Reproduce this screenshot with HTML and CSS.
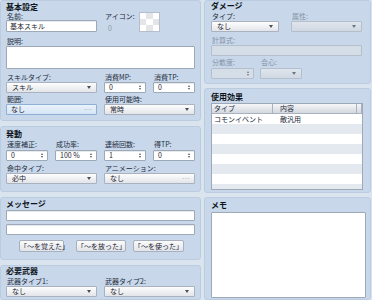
FILE: index.html
```html
<!DOCTYPE html>
<html lang="ja">
<head>
<meta charset="utf-8">
<link rel="stylesheet" href="styles.css">
</head>
<body>
<div class="app">
  <div class="col col-left">
    <section class="panel p-basic">
      <h2 class="ttl">基本設定</h2>
      <div class="row-name">
        <div class="f w-name"><div class="lbl">名前:</div><div class="ctl input">基本スキル</div></div>
        <div class="f w-icon"><div class="lbl">アイコン:</div><div class="icon-idx">0</div></div>
        <div class="icon-box"><i></i><i class="g"></i><i></i><i class="g"></i><i></i><i class="g"></i><i></i><i class="g"></i><i></i></div>
      </div>
      <div class="f mt4"><div class="lbl">説明:</div><div class="ctl textarea"></div></div>
      <div class="grid4 mt4">
        <div class="f span2"><div class="lbl">スキルタイプ:</div><div class="ctl select"><span>スキル</span><i class="arr"></i></div></div>
        <div class="f"><div class="lbl">消費MP:</div><div class="ctl input num"><span>0</span><i class="spin"><b class="up"></b><b class="dn"></b></i></div></div>
        <div class="f"><div class="lbl">消費TP:</div><div class="ctl input num"><span>0</span><i class="spin"><b class="up"></b><b class="dn"></b></i></div></div>
      </div>
      <div class="grid4 mt2">
        <div class="f span2"><div class="lbl">範囲:</div><div class="ctl pick focus"><span>なし</span><i class="dots">···</i></div></div>
        <div class="f span2"><div class="lbl">使用可能時:</div><div class="ctl select"><span>常時</span><i class="arr"></i></div></div>
      </div>
    </section>

    <section class="panel p-invoke">
      <h2 class="ttl">発動</h2>
      <div class="grid4 mt1">
        <div class="f"><div class="lbl lb10">速度補正:</div><div class="ctl input num"><span>0</span><i class="spin"><b class="up"></b><b class="dn"></b></i></div></div>
        <div class="f"><div class="lbl lb10">成功率:</div><div class="ctl input num"><span>100 %</span><i class="spin"><b class="up"></b><b class="dn"></b></i></div></div>
        <div class="f"><div class="lbl lb10">連続回数:</div><div class="ctl input num"><span>1</span><i class="spin"><b class="up"></b><b class="dn"></b></i></div></div>
        <div class="f"><div class="lbl lb10">得TP:</div><div class="ctl input num"><span>0</span><i class="spin"><b class="up"></b><b class="dn"></b></i></div></div>
      </div>
      <div class="grid4 mt3">
        <div class="f span2"><div class="lbl">命中タイプ:</div><div class="ctl select"><span>必中</span><i class="arr"></i></div></div>
        <div class="f span2"><div class="lbl">アニメーション:</div><div class="ctl pick"><span>なし</span><i class="dots">···</i></div></div>
      </div>
    </section>

    <section class="panel p-msg">
      <h2 class="ttl">メッセージ</h2>
      <div class="ctl input mt1"></div>
      <div class="ctl input mt3"></div>
      <div class="btns">
        <button class="btn b1">「～を覚えた」</button>
        <button class="btn b2">「～を放った」</button>
        <button class="btn b3">「～を使った」</button>
      </div>
    </section>

    <section class="panel p-weapon">
      <h2 class="ttl t0">必要武器</h2>
      <div class="grid4 mt1">
        <div class="f span2"><div class="lbl">武器タイプ1:</div><div class="ctl select"><span>なし</span><i class="arr"></i></div></div>
        <div class="f span2"><div class="lbl">武器タイプ2:</div><div class="ctl select"><span>なし</span><i class="arr"></i></div></div>
      </div>
    </section>
  </div>

  <div class="col col-right">
    <section class="panel p-damage">
      <h2 class="ttl t0">ダメージ</h2>
      <div class="dmg-row mt1">
        <div class="f w-type"><div class="lbl">タイプ:</div><div class="ctl select"><span>なし</span><i class="arr"></i></div></div>
        <div class="f w-elem"><div class="lbl dis">属性:</div><div class="ctl select disabled"><span></span><i class="arr"></i></div></div>
      </div>
      <div class="f mt4 w-formula"><div class="lbl dis">計算式:</div><div class="ctl input disabled"></div></div>
      <div class="dmg-row2 mt2">
        <div class="f w-var"><div class="lbl lb10 dis">分散度:</div><div class="ctl input num disabled"><span></span><i class="spin"><b class="up"></b><b class="dn"></b></i></div></div>
        <div class="f w-crit"><div class="lbl lb10 dis">会心:</div><div class="ctl select disabled"><span></span><i class="arr"></i></div></div>
      </div>
    </section>

    <section class="panel p-effects">
      <h2 class="ttl t3">使用効果</h2>
      <div class="table">
        <div class="tr thead"><span class="c1">タイプ</span><span class="c2">内容</span><span class="c3"></span></div>
        <div class="tr"><span class="c1">コモンイベント</span><span class="c2">敵汎用</span><span class="c3"></span></div>
        <div class="tr alt"></div>
        <div class="tr"></div>
        <div class="tr alt"></div>
        <div class="tr"></div>
        <div class="tr alt"></div>
        <div class="tr"></div>
        <div class="tr alt"></div>
      </div>
    </section>

    <section class="panel p-memo">
      <h2 class="ttl">メモ</h2>
      <div class="ctl textarea memo"></div>
    </section>
  </div>
</div>
</body>
</html>
```

FILE: styles.css
```css
* { box-sizing: border-box; margin: 0; padding: 0; }
html, body { width: 372px; height: 300px; overflow: hidden; }
body {
  background: #dae4ef;
  font-family: "Noto Sans CJK JP", "Noto Sans", sans-serif;
  font-size: 7px;
  color: #1d2b3d;
}
.app { display: flex; gap: 3px; height: 300px; }
.col { display: flex; flex-direction: column; }
.col-left { width: 201px; gap: 5px; }
.col-right { width: 167px; gap: 4px; }

.panel {
  background: #c8d7e9;
  border: 1px solid #bccce0;
  border-radius: 3px;
  flex: none;
}
.col-left .panel { padding: 0 5px 0 5px; }
.col-right .panel { padding: 0 4px 0 6px; }
.p-basic { height: 121px; }
.p-invoke { height: 66px; }
.p-msg { height: 63px; }
.p-weapon { flex: 1 1 auto !important; }
.p-damage { height: 84px; }
.p-effects { height: 105px; }
.p-memo { flex: 1 1 auto !important; }

.ttl {
  font-size: 8px;
  font-weight: 700;
  color: #0d1420;
  height: 10px;
  line-height: 10px;
  margin-top: 1px;
}
.p-invoke .ttl { margin-top: 2px; }
.ttl.t0 { margin-top: 0; }
.ttl.t3 { margin-top: 3px; }
.p-memo .ttl { margin-top: 2px; }

.mt1 { margin-top: 1px; }
.mt2 { margin-top: 2px; }
.mt3 { margin-top: 3px; }
.mt4 { margin-top: 4px; }

.f { display: flex; flex-direction: column; min-width: 0; }
.lbl { height: 9px; line-height: 9px; padding-left: 1px; white-space: nowrap; }
.lb10 { height: 10px; }
.lbl.dis { color: #8593a8; }

.grid4 {
  display: grid;
  grid-template-columns: 42px 42px 42px 42px;
  column-gap: 7px;
}
.span2 { grid-column: span 2; }

.row-name { display: flex; height: 21px; }
.w-name { width: 91px; }
.w-name .lbl { height: 8px; line-height: 8px; }
.w-name .ctl { height: 12px; }
.w-icon { width: 35px; margin-left: 7px; }
.w-icon .lbl { height: 8px; line-height: 8px; }
.icon-idx { color: #8e9aab; padding: 2px 0 0 4px; line-height: 12px; }
.icon-box {
  width: 21px; height: 20px;
  display: grid;
  grid-template-columns: repeat(3, 1fr);
  grid-template-rows: repeat(3, 1fr);
  border: 1px solid #b3bfcd;
  background: #fff;
}
.icon-box i { background: #ffffff; }
.icon-box i.g { background: #e3e5e8; }

.ctl {
  height: 11px;
  line-height: 9px;
  border: 1px solid #9ea9b8;
  background: #fff;
  border-radius: 1px;
  padding: 0 4px 0 4px;
  display: flex;
  align-items: center;
  justify-content: space-between;
  white-space: nowrap;
  color: #1d2430;
}
.ctl.input { padding-left: 3px; box-shadow: inset 0 1px 0 #e6e9ee; }
.ctl.textarea { height: 23px; }
.ctl.memo { height: 86px; width: 155px; margin-top: 2px; }
.ctl.select, .ctl.pick {
  background: linear-gradient(#fdfdfd, #e2e5e9);
  border-color: #a9b2be;
  padding-left: 5px;
}
.ctl.pick.focus {
  background: linear-gradient(#eaf2fb, #d5e4f4);
  border-color: #8eafd6;
  padding-left: 4px;
}
.arr {
  width: 0; height: 0;
  border-left: 2px solid transparent;
  border-right: 2px solid transparent;
  border-top: 3px solid #4a4f57;
  margin-right: 1px;
}
.dots { font-style: normal; color: #6a7380; font-size: 6px; letter-spacing: -0.5px; }
.spin { display: flex; flex-direction: column; gap: 1px; margin-right: 0; }
.spin b { width: 0; height: 0; border-left: 1.5px solid transparent; border-right: 1.5px solid transparent; }
.spin .up { border-bottom: 2px solid #555; }
.spin .dn { border-top: 2px solid #555; }
.ctl.num { padding-left: 4px; }

.ctl.disabled {
  background: #d5dde7;
  border-color: #b3bfcd;
  box-shadow: none;
}
.ctl.select.disabled { background: linear-gradient(#dfe5ec, #d0d8e2); }
.ctl.disabled .arr { border-top-color: #6d7684; }
.ctl.disabled .spin .up { border-bottom-color: #6d7684; }
.ctl.disabled .spin .dn { border-top-color: #6d7684; }

.btns { display: flex; margin-top: 5px; padding-left: 13px; }
.btn {
  height: 12px;
  font-family: inherit;
  font-size: 7px;
  line-height: 10px;
  color: #1d2430;
  background: linear-gradient(#fbfbfb, #e1e4e8);
  border: 1px solid #a7b0bc;
  border-radius: 2px;
  text-align: center;
  white-space: nowrap;
  padding: 0;
}
.b1 { width: 45px; }
.b2 { width: 50px; margin-left: 12px; }
.b3 { width: 51px; margin-left: 7px; }

.dmg-row { display: flex; }
.w-type { width: 68px; }
.w-elem { width: 71px; margin-left: 12px; }
.w-formula { width: 151px; }
.dmg-row2 { display: flex; }
.w-var { width: 43px; }
.w-crit { width: 42px; margin-left: 6px; }

.table {
  width: 152px;
  height: 87px;
  margin-top: 1px;
  border: 1px solid #9ea9b8;
  background: #fff;
  overflow: hidden;
}
.tr {
  display: grid;
  grid-template-columns: 61px 84px 1fr;
  height: 10px;
  line-height: 10px;
  white-space: nowrap;
}
.tr.alt { background: #e4e9f0; }
.thead {
  background: linear-gradient(#f5f6f8, #d3d8df);
  border-bottom: 1px solid #a9b2be;
  height: 10px;
  line-height: 9px;
}
.thead span { border-right: 1px solid #a9b2be; }
.thead .c1 { padding-left: 5px; }
.thead .c2 { padding-left: 7px; }
.tr .c1 { padding-left: 2px; }
.tr .c2 { padding-left: 7px; }
```
